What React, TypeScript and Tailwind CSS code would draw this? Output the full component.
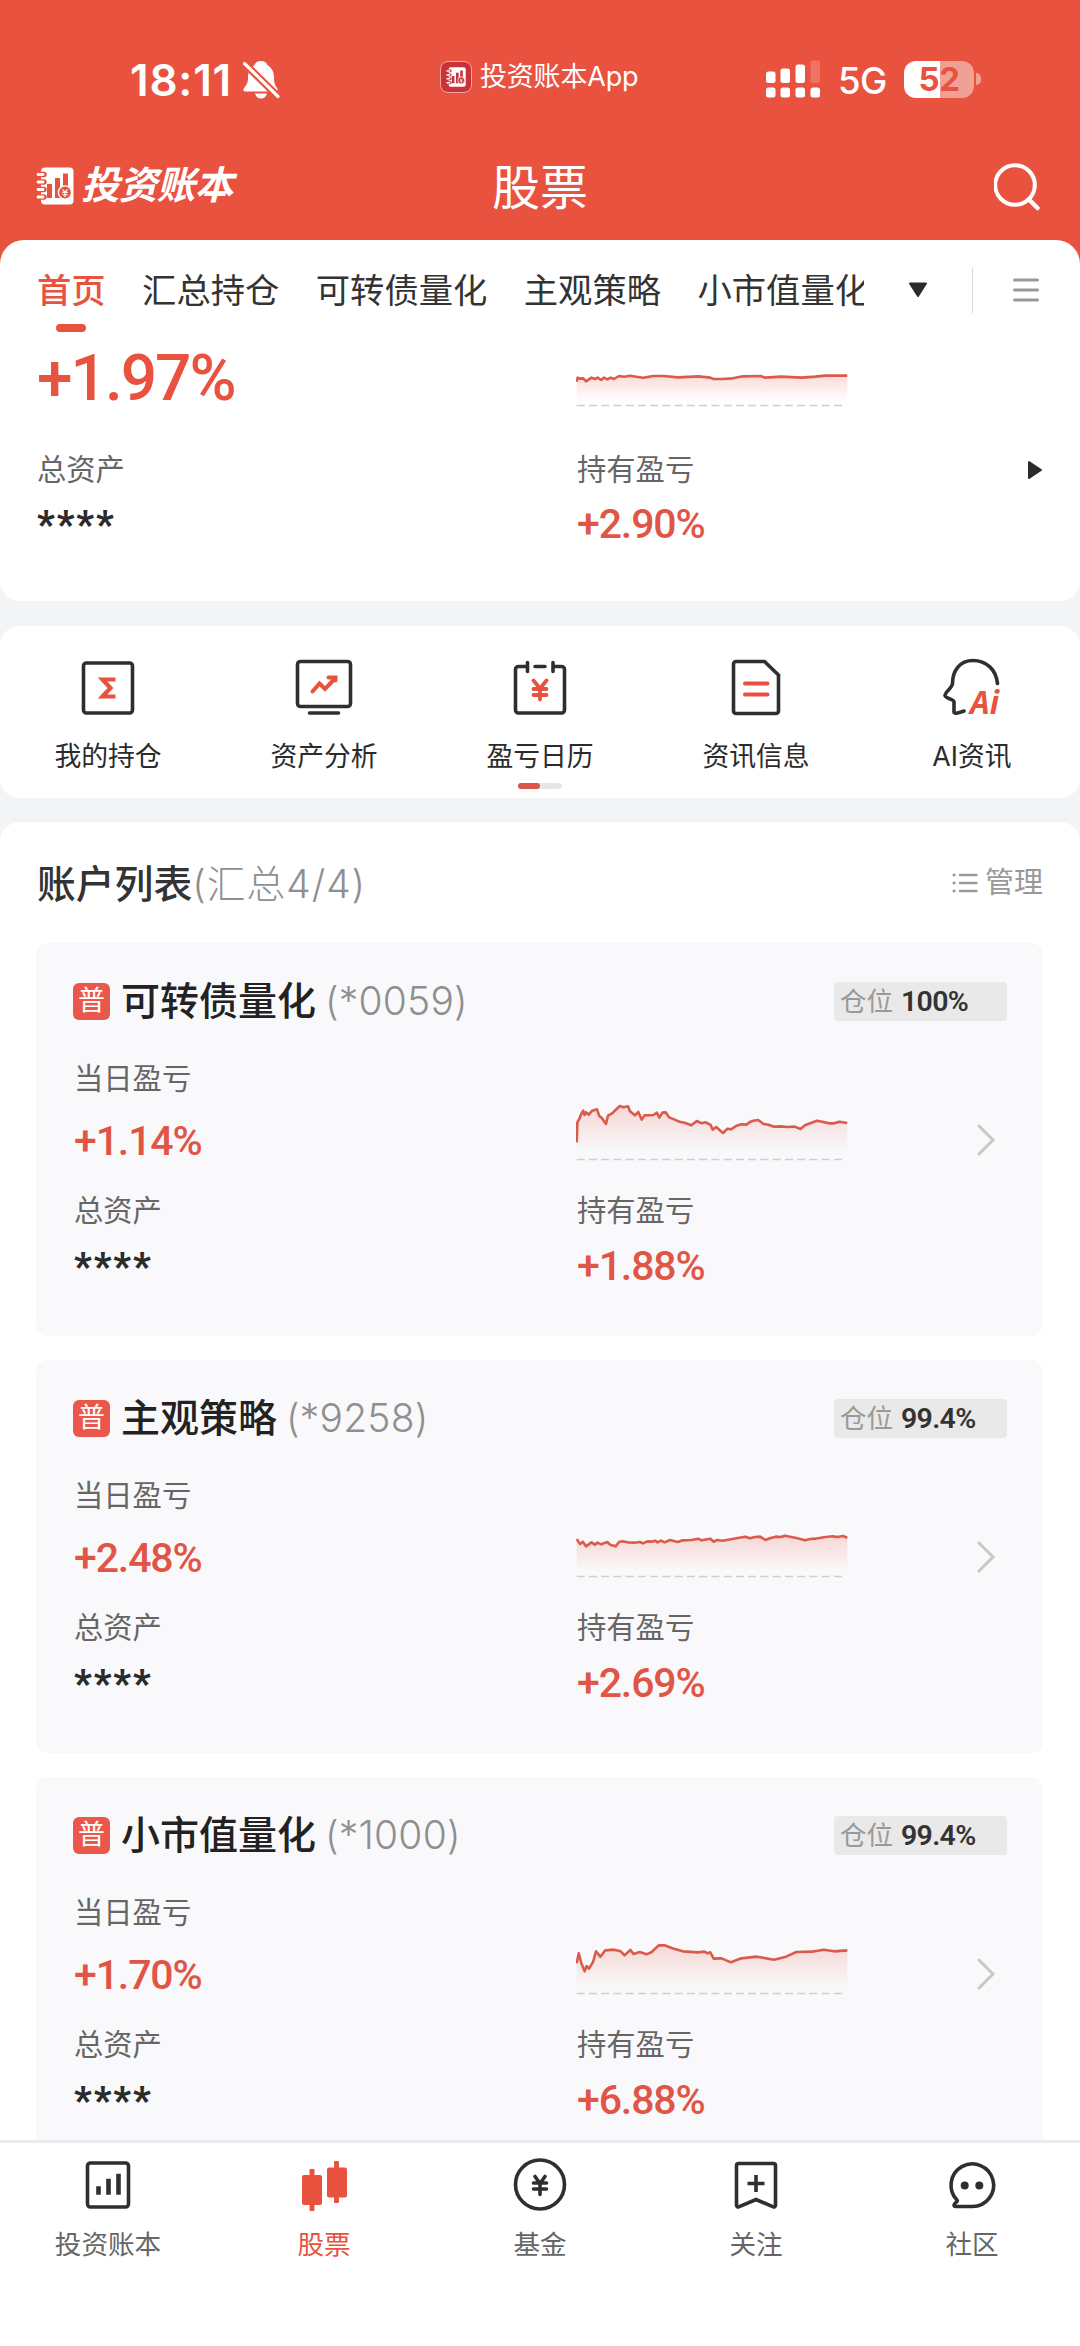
import type { ReactNode } from "react";

const accounts = [
  {
    name: "可转债量化",
    code: "0059",
    position: "100%",
    today: "+1.14%",
    hold: "+1.88%",
    points:
      "2,127 4,67 11,54 15,42 21,32 25,45 29,37 37,44 47,32 61,28 67,47 75,54 87,72 93,47 105,40 115,30 127,18 137,22 151,19 157,34 171,46 181,36 191,59 199,46 225,45 235,38 242,53 251,38 261,37 270,52 287,59 300,65 315,68 335,76 351,63 365,70 377,67 391,75 397,89 407,81 427,99 440,86 450,88 465,78 480,73 495,74 507,65 515,62 529,60 545,72 559,74 575,80 595,79 615,81 635,80 652,87 665,76 680,70 700,62 715,65 735,70 750,70 765,65 788,69",
  },
  {
    name: "主观策略",
    code: "9258",
    position: "99.4%",
    today: "+2.48%",
    hold: "+2.69%",
    points:
      "2,66 7,74 12,81 20,74 29,88 45,76 55,83 63,77 73,82 83,78 91,75 99,83 115,88 125,75 135,73 150,76 170,77 185,75 195,79 207,73 220,74 230,71 237,76 247,71 257,76 273,69 295,75 310,70 335,69 355,65 365,70 390,65 400,74 410,69 425,71 450,67 470,63 492,59 505,64 520,60 535,59 550,69 563,64 580,59 595,60 607,56 625,60 640,63 665,70 680,66 695,65 720,61 745,58 760,60 775,57 788,62",
  },
  {
    name: "小市值量化",
    code: "1000",
    position: "99.4%",
    today: "+1.70%",
    hold: "+6.88%",
    points:
      "2,88 8,58 15,86 25,112 31,96 38,104 50,83 58,52 71,68 85,49 110,47 130,52 141,64 158,48 167,60 185,54 205,61 220,54 240,34 257,34 280,43 310,52 355,55 373,53 382,58 390,55 400,74 423,73 450,85 480,73 525,68 575,77 610,68 640,54 685,53 720,47 750,52 788,49",
  },
];

const summaryPoints =
  "2,107 5,95 11,98 21,97 29,106 45,95 55,99 63,95 73,102 81,95 91,100 101,95 110,99 125,90 140,92 157,89 175,92 195,95 225,90 255,90 295,94 355,91 390,95 400,99 425,99 455,97 485,91 535,90 550,95 595,92 655,95 695,92 725,89 788,89";

const tabs = ["首页", "汇总持仓", "可转债量化", "主观策略", "小市值量化"];

function Sparkline({ id, points }: { id: string; points: string }) {
  return (
    <svg
      className="w-[272px] h-16 shrink-0"
      viewBox="0 0 790 192"
      preserveAspectRatio="none"
      fill="none">
      <defs>
        <linearGradient id={id} x1="0" y1="0" x2="0" y2="1">
          <stop offset="0" stopColor="#e9523f" stopOpacity="0.2" />
          <stop offset="0.9" stopColor="#e9523f" stopOpacity="0" />
        </linearGradient>
      </defs>
      <polygon points={`2,176 ${points} 788,176`} fill={`url(#${id})`} />
      <polyline
        points={points}
        stroke="#dc5a4c"
        strokeWidth="2.6"
        strokeLinejoin="round"
        vectorEffect="non-scaling-stroke"
      />
      <path
        d="M2 178.5H776"
        stroke="#cfcfcf"
        strokeWidth="1.5"
        strokeDasharray="8 4.25"
        vectorEffect="non-scaling-stroke"
      />
    </svg>
  );
}

function NotebookIcon({ size, hole }: { size: number; hole: string }) {
  return (
    <svg width={size} height={size} viewBox="0 0 38 38" fill="none">
      <rect x="5" y="0.5" width="32.5" height="37" rx="4" fill="#fff" />
      <path
        d="M3 7.5H8M3 15H8M3 22.5H8M3 30H8"
        stroke={hole}
        strokeWidth="5.4"
        strokeLinecap="round"
      />
      <path
        d="M2 7.5H7M2 15H7M2 22.5H7M2 30H7"
        stroke="#fff"
        strokeWidth="2.8"
        strokeLinecap="round"
      />
      <path d="M11 17h5v14h-5zM19 11h5v20h-5zM27 6.5h5v18h-5z" fill={hole} />
      <circle cx="29" cy="25.5" r="6.6" fill={hole} stroke="#fff" strokeWidth="1.4" />
      <path
        d="M26.6 22.4l2.4 2.8 2.4-2.8M29 25v5M26.4 25.4h5.2M26.4 27.8h5.2"
        stroke="#fff"
        strokeWidth="1.1"
      />
    </svg>
  );
}

function StatusBar() {
  return (
    <div className="flex h-[140px] pt-[56px] text-white">
      <div className="flex w-[440px] h-12 items-center pl-[130px]">
        <span className="w-[113px] text-[44px] leading-[48px] font-semibold tracking-[0.8px]">
          18:11
        </span>
        <svg width="37" height="40" viewBox="0 0 37 40">
          <path
            d="M18 1c3.400 0 5.600 1.600 6.600 4.200C29 8 31 12 31 18c0 5 1 7 3 10 1.200 2 .4 3.500-1.600 3.500H2.500C.4 31.500-.2 29.800 1 28c2.500-3 4-5 4-10 0-6 2-10 6.400-12.800C12.400 2.600 14.600 1 18 1z"
            fill="#fff"
          />
          <path d="M12 33.500h12c-.8 3-3 5-6 5s-5.200-2-6-5z" fill="#fff" />
          <path d="M-2 0L38 39.500" stroke="#e9523f" strokeWidth="7.400" />
          <path d="M1.500 3.500L35 36.500" stroke="#fff" strokeWidth="3.200" strokeLinecap="round" />
        </svg>
      </div>
      <div className="flex w-[326px] h-[42px] items-center">
        <div className="flex h-8 w-8 items-center justify-center rounded-lg border-[1.5px] border-[#f3a79c] bg-[#c8323a]">
          <NotebookIcon size={20} hole="#c8323a" />
        </div>
        <span className="ml-2 text-[27px] leading-[42px] tracking-[-0.2px]">投资账本App</span>
      </div>
      <div className="flex h-[46px] items-center">
        <svg width="54" height="38" viewBox="0 0 54 38" fill="#fff">
          <rect x="0" y="11.500" width="9.500" height="11.500" rx="2.500" />
          <rect x="14.500" y="8.500" width="9.500" height="14.500" rx="2.500" />
          <rect x="29.500" y="4.500" width="9.500" height="18.500" rx="2.500" />
          <rect x="44.500" y="0.500" width="9.500" height="22.500" rx="2.500" opacity="0.200" />
          <rect x="0" y="27.500" width="9.500" height="10" rx="2.500" />
          <rect x="14.500" y="27.500" width="9.500" height="10" rx="2.500" />
          <rect x="29.500" y="27.500" width="9.500" height="10" rx="2.500" />
          <rect x="44.500" y="27.500" width="9.500" height="10" rx="2.500" />
        </svg>
        <span className="ml-[18px] w-[66px] text-[36.5px] font-medium leading-[46px] tracking-[-0.6px] pt-1">
          5G
        </span>
        <div className="flex h-[37px] w-[70px] items-center justify-center rounded-[12px] bg-[linear-gradient(90deg,#fff_51.5%,#f1a096_51.5%)] text-[33px] font-bold leading-[37px] tracking-[-0.5px] text-[#e9523f]">
          52
        </div>
        <div className="ml-[2px] h-3 w-[5px] rounded-r-full bg-[#f1a096]" />
      </div>
    </div>
  );
}

function TitleBar() {
  return (
    <div className="grid h-[100px] grid-cols-[1fr_auto_1fr] px-9 text-white">
      <div className="flex h-[91px] items-center">
        <NotebookIcon size={38} hole="#e9523f" />
        <span className="ml-[7px] text-[38.5px] font-bold italic leading-none tracking-[-0.6px]">
          投资账本
        </span>
      </div>
      <h1 className="h-[96px] text-[48px] leading-[96px]">股票</h1>
      <div className="flex h-[94px] items-center justify-end">
        <svg width="50" height="50" viewBox="0 0 50 50" fill="none" stroke="#fff" strokeWidth="4">
          <circle cx="21" cy="23" r="19.800" />
          <path d="M35.500 38l8 8" strokeWidth="4.500" strokeLinecap="round" />
        </svg>
      </div>
    </div>
  );
}

function TabBar() {
  return (
    <div className="bg-[#e9523f]">
      <div className="flex h-[100px] rounded-t-[24px] bg-white">
        <div className="flex w-[864px] gap-[36.5px] overflow-hidden whitespace-nowrap pl-[37px] text-[34.3px] leading-[102px] text-[#333]">
          {tabs.map((tab, i) =>
            i === 0 ? (
              <div key={tab} className="flex shrink-0 flex-col items-center font-medium text-[#e9523f]">
                <span className="h-[84px]">{tab}</span>
                <span className="h-2 w-[30px] rounded-full bg-[#e9523f]" />
              </div>
            ) : (
              <span key={tab} className="shrink-0">
                {tab}
              </span>
            )
          )}
        </div>
        <div className="flex h-[100px] items-center pl-11">
          <svg width="20" height="16" viewBox="0 0 20 16">
            <path d="M2 1.500h16L10 14z" fill="#2b2b2b" stroke="#2b2b2b" strokeWidth="2" strokeLinejoin="round" />
          </svg>
          <div className="ml-11 h-[45px] w-px bg-[#d8d8d8]" />
          <svg className="ml-10" width="26" height="24" viewBox="0 0 26 24">
            <path d="M1.500 2h23M1.500 12h23M1.500 22h23" stroke="#999" strokeWidth="3" strokeLinecap="round" />
          </svg>
        </div>
      </div>
    </div>
  );
}

function Label({ children }: { children: ReactNode }) {
  return <p className="h-9 text-[29.3px] leading-9 text-[#666]">{children}</p>;
}

function Percent({ children }: { children: ReactNode }) {
  return (
    <p className="h-12 font-[Roboto] text-[41px] font-medium leading-[50px] tracking-[-1.1px] text-[#e05545]">
      {children}
    </p>
  );
}

function Masked() {
  return (
    <p className="h-12 pt-[2px] font-[Roboto] text-[38px] font-black leading-[48px] tracking-[2px] text-[#2b2b2b]">
      ****
    </p>
  );
}

function Summary() {
  return (
    <section className="h-[261px] rounded-b-[20px] bg-white pl-[37px]">
      <div className="grid h-[72px] grid-cols-[539px_1fr]">
        <p className="font-[Roboto] text-[64px] font-medium leading-[77px] tracking-[-2px] text-[#e9523f]">
          +1.97%
        </p>
        <div className="pt-[6px]">
          <Sparkline id="summary" points={summaryPoints} />
        </div>
      </div>
      <div className="mt-10 grid grid-cols-[540px_1fr]">
        <div>
          <Label>总资产</Label>
          <div className="mt-[11px]">
            <Masked />
          </div>
        </div>
        <div className="flex justify-between pr-[37px]">
          <div>
            <Label>持有盈亏</Label>
            <div className="mt-[11px]">
              <Percent>+2.90%</Percent>
            </div>
          </div>
          <svg className="mt-2" width="16" height="20" viewBox="0 0 16 20">
            <path d="M2 2v16l12-8z" fill="#2b2b2b" stroke="#2b2b2b" strokeWidth="2" strokeLinejoin="round" />
          </svg>
        </div>
      </div>
    </section>
  );
}

const shortcuts: { label: string; icon: ReactNode }[] = [
  {
    label: "我的持仓",
    icon: (
      <>
        <rect x="5.500" y="5" width="49" height="50" rx="3" />
        <path d="M37.500 21.500H24.500l8 8.500-8 8.500h13" stroke="#e9523f" strokeWidth="4.200" />
      </>
    ),
  },
  {
    label: "资产分析",
    icon: (
      <>
        <rect x="3.500" y="3.500" width="53" height="45" rx="3" />
        <path d="M15.500 55h29" strokeLinecap="round" />
        <path
          d="M18.500 33.500l7-8 5.500 5.500 10-10.500M34.500 19.500h7v3"
          stroke="#e9523f"
          strokeWidth="4"
          strokeLinecap="round"
        />
      </>
    ),
  },
  {
    label: "盈亏日历",
    icon: (
      <>
        <path
          d="M17 8.500H8.500a3 3 0 0 0-3 3V52a3 3 0 0 0 3 3h43a3 3 0 0 0 3-3V11.500a3 3 0 0 0-3-3H43M25 8.500h10M17.500 4.500v9M43 4.500v9"
          strokeLinecap="round"
        />
        <path
          d="M23.500 22.500l6.500 8 6.500-8M30 30.500v11M23.500 31h13M23.500 37h13"
          stroke="#e9523f"
          strokeWidth="3.800"
          strokeLinecap="round"
        />
      </>
    ),
  },
  {
    label: "资讯信息",
    icon: (
      <>
        <path d="M10 3.500h28.500L52.500 17v36a2.500 2.500 0 0 1-2.500 2.500H10A2.500 2.500 0 0 1 7.500 53V6A2.500 2.500 0 0 1 10 3.500z" />
        <path d="M19 25.500h22.500M19 36.500h22.500" stroke="#e9523f" strokeWidth="4" strokeLinecap="round" />
      </>
    ),
  },
  {
    label: "AI资讯",
    icon: (
      <>
        <path
          d="M55.500 25.500C54 11 44 2.500 31 2.500 18 2.500 10.500 12.500 10.500 25.500c0 4-7.500 8.500-7.500 12 0 3 9 3.500 9 6.500v10c0 2.500 6 .5 10-1"
          strokeLinecap="round"
        />
        <text
          x="28"
          y="56"
          fill="#e9523f"
          stroke="none"
          fontFamily="Open Sans, sans-serif"
          fontSize="33"
          fontStyle="italic"
          fontWeight="700"
          textLength="29"
          lengthAdjust="spacingAndGlyphs">
          Ai
        </text>
      </>
    ),
  },
];

function Shortcuts() {
  return (
    <section className="mt-[25px] h-[172px] shrink-0 rounded-[20px] bg-white pt-8">
      <div className="grid grid-cols-5">
        {shortcuts.map(({ label, icon }) => (
          <div key={label} className="flex flex-col items-center">
            <svg
              className="overflow-visible"
              width="60"
              height="60"
              viewBox="0 0 60 60"
              fill="none"
              stroke="#2f2f2f"
              strokeWidth="3.600">
              {icon}
            </svg>
            <span className="mt-5 h-9 text-[26.8px] leading-9 text-[#2b2b2b]">{label}</span>
          </div>
        ))}
      </div>
      <div className="mx-auto mt-[9px] flex h-[6px] w-11 rounded-full bg-[#e6e6e6]">
        <div className="w-1/2 rounded-full bg-[#d9584e]" />
      </div>
    </section>
  );
}

function AccountCard({ account }: { account: (typeof accounts)[number] }) {
  return (
    <article className="h-[392.500px] shrink-0 rounded-[12px] bg-[#f9f9fb] pl-[38px] pr-9 pt-[38px]">
      <div className="flex h-10 items-center">
        <span className="-ml-px h-[37px] w-[37px] rounded-[6px] bg-[#e9584a] text-center text-[27px] leading-[36px] text-white">
          普
        </span>
        <h3 className="ml-[11px] text-[39px] font-medium leading-10 text-[#222]">{account.name}</h3>
        <span className="ml-[9px] text-[39px] font-light leading-10 tracking-[0.2px] text-[#8f8f8f]">
          (*{account.code})
        </span>
        <div className="ml-auto flex h-[39px] w-[173px] items-center rounded-[4px] bg-[#e9e9e9] pl-[6px]">
          <span className="text-[26.5px] leading-[39px] text-[#999]">仓位</span>
          <span className="ml-2 font-[Roboto] text-[28.500px] font-semibold leading-[39px] tracking-[-0.7px] text-[#333]">
            {account.position}
          </span>
        </div>
      </div>
      <div className="mt-[39.5px] flex h-[103px] items-end">
        <div className="w-[502px]">
          <Label>当日盈亏</Label>
          <div className="mt-[19px]">
            <Percent>{account.today}</Percent>
          </div>
        </div>
        <Sparkline id={`chart-${account.code}`} points={account.points} />
        <svg className="mb-2 ml-auto mr-[11px]" width="20" height="32" viewBox="0 0 20 32" fill="none">
          <path d="M3 2l14 14L3 30" stroke="#c8c8c8" strokeWidth="3" strokeLinecap="round" />
        </svg>
      </div>
      <div className="mt-[29px] grid grid-cols-[503px_1fr] gap-y-3">
        <Label>总资产</Label>
        <Label>持有盈亏</Label>
        <Masked />
        <Percent>{account.hold}</Percent>
      </div>
    </article>
  );
}

function AccountList() {
  return (
    <section className="mt-6 min-h-0 flex-1 overflow-hidden rounded-t-[20px] bg-white pl-9 pr-[37px] pt-[37px]">
      <div className="flex h-12 items-center justify-between pl-px">
        <h2 className="text-[38.8px] font-medium leading-[49px] text-[#333]">
          账户列表
          <span className="font-light tracking-[1px] text-[#8f8f8f]">(汇总4/4)</span>
        </h2>
        <div className="flex items-center gap-[7px] text-[29px] leading-[48px] text-[#999]">
          <svg width="26" height="20" viewBox="0 0 26 20" stroke="#999" strokeWidth="2.400" strokeLinecap="round">
            <path d="M2 2h.1M2 10h.1M2 18h.1" strokeWidth="3" />
            <path d="M8 2h16.500M8 10h16.500M8 18h16.500" />
          </svg>
          管理
        </div>
      </div>
      <div className="mt-9 flex flex-col gap-[24.500px]">
        {accounts.map((account) => (
          <AccountCard key={account.code} account={account} />
        ))}
      </div>
    </section>
  );
}

const navItems: { label: string; icon: ReactNode }[] = [
  {
    label: "投资账本",
    icon: (
      <>
        <rect x="9.500" y="8" width="41" height="44" rx="3" />
        <path d="M20.500 33.500v4M30.500 26v11.500M40.500 21v16.500" strokeWidth="4.600" strokeLinecap="square" />
      </>
    ),
  },
  {
    label: "股票",
    icon: (
      <g fill="#e9523f" stroke="none">
        <rect x="8" y="20" width="20" height="30" rx="2" />
        <rect x="15.500" y="14" width="5" height="42" rx="1" />
        <rect x="33" y="12.500" width="20" height="30" rx="2" />
        <rect x="40" y="6" width="5" height="42" rx="1" />
      </g>
    ),
  },
  {
    label: "基金",
    icon: (
      <>
        <circle cx="30" cy="29.500" r="24.500" />
        <path d="M25 21.500l5 7 5-7M30 28.500v11M23.500 28h13M23.500 34h13" strokeLinecap="round" />
      </>
    ),
  },
  {
    label: "关注",
    icon: (
      <>
        <path d="M12.500 8.500h35a2 2 0 0 1 2 2V50.500a1.600 1.600 0 0 1-2.200 1.400L30 44.500l-17.300 7.400a1.600 1.600 0 0 1-2.200-1.400V10.500a2 2 0 0 1 2-2z" />
        <path d="M21.500 28.500h17M30 20v17" />
      </>
    ),
  },
  {
    label: "社区",
    icon: (
      <>
        <path d="M30.500 51.500a21.300 21.300 0 1 0-15.500-6.500c1.500 1.500-3 3-3 5 0 1 .8 1.500 2 1.500z" />
        <circle cx="22.700" cy="30.500" r="4" fill="#2f2f2f" stroke="none" />
        <circle cx="37.300" cy="30.500" r="4" fill="#2f2f2f" stroke="none" />
      </>
    ),
  },
];

function BottomNav() {
  return (
    <nav className="grid h-[206px] shrink-0 grid-cols-5 border-t-[3px] border-[#ebecee] bg-white pt-3">
      {navItems.map(({ label, icon }, i) => (
        <div key={label} className="flex flex-col items-center">
          <svg width="60" height="60" viewBox="0 0 60 60" fill="none" stroke="#2f2f2f" strokeWidth="3.600">
            {icon}
          </svg>
          <span
            className={
              i === 1
                ? "mt-[11px] h-9 text-[26.6px] leading-9 text-[#e9523f]"
                : "mt-[11px] h-9 text-[26.6px] leading-9 text-[#666]"
            }>
            {label}
          </span>
        </div>
      ))}
    </nav>
  );
}

export default function App() {
  return (
    <div className="flex h-[2346px] w-[1080px] flex-col overflow-hidden bg-[#f3f4f6] font-[Inter,'Noto_Sans_CJK_SC',sans-serif]">
      <header className="bg-[#e9523f]">
        <StatusBar />
        <TitleBar />
      </header>
      <TabBar />
      <Summary />
      <Shortcuts />
      <AccountList />
      <BottomNav />
    </div>
  );
}
